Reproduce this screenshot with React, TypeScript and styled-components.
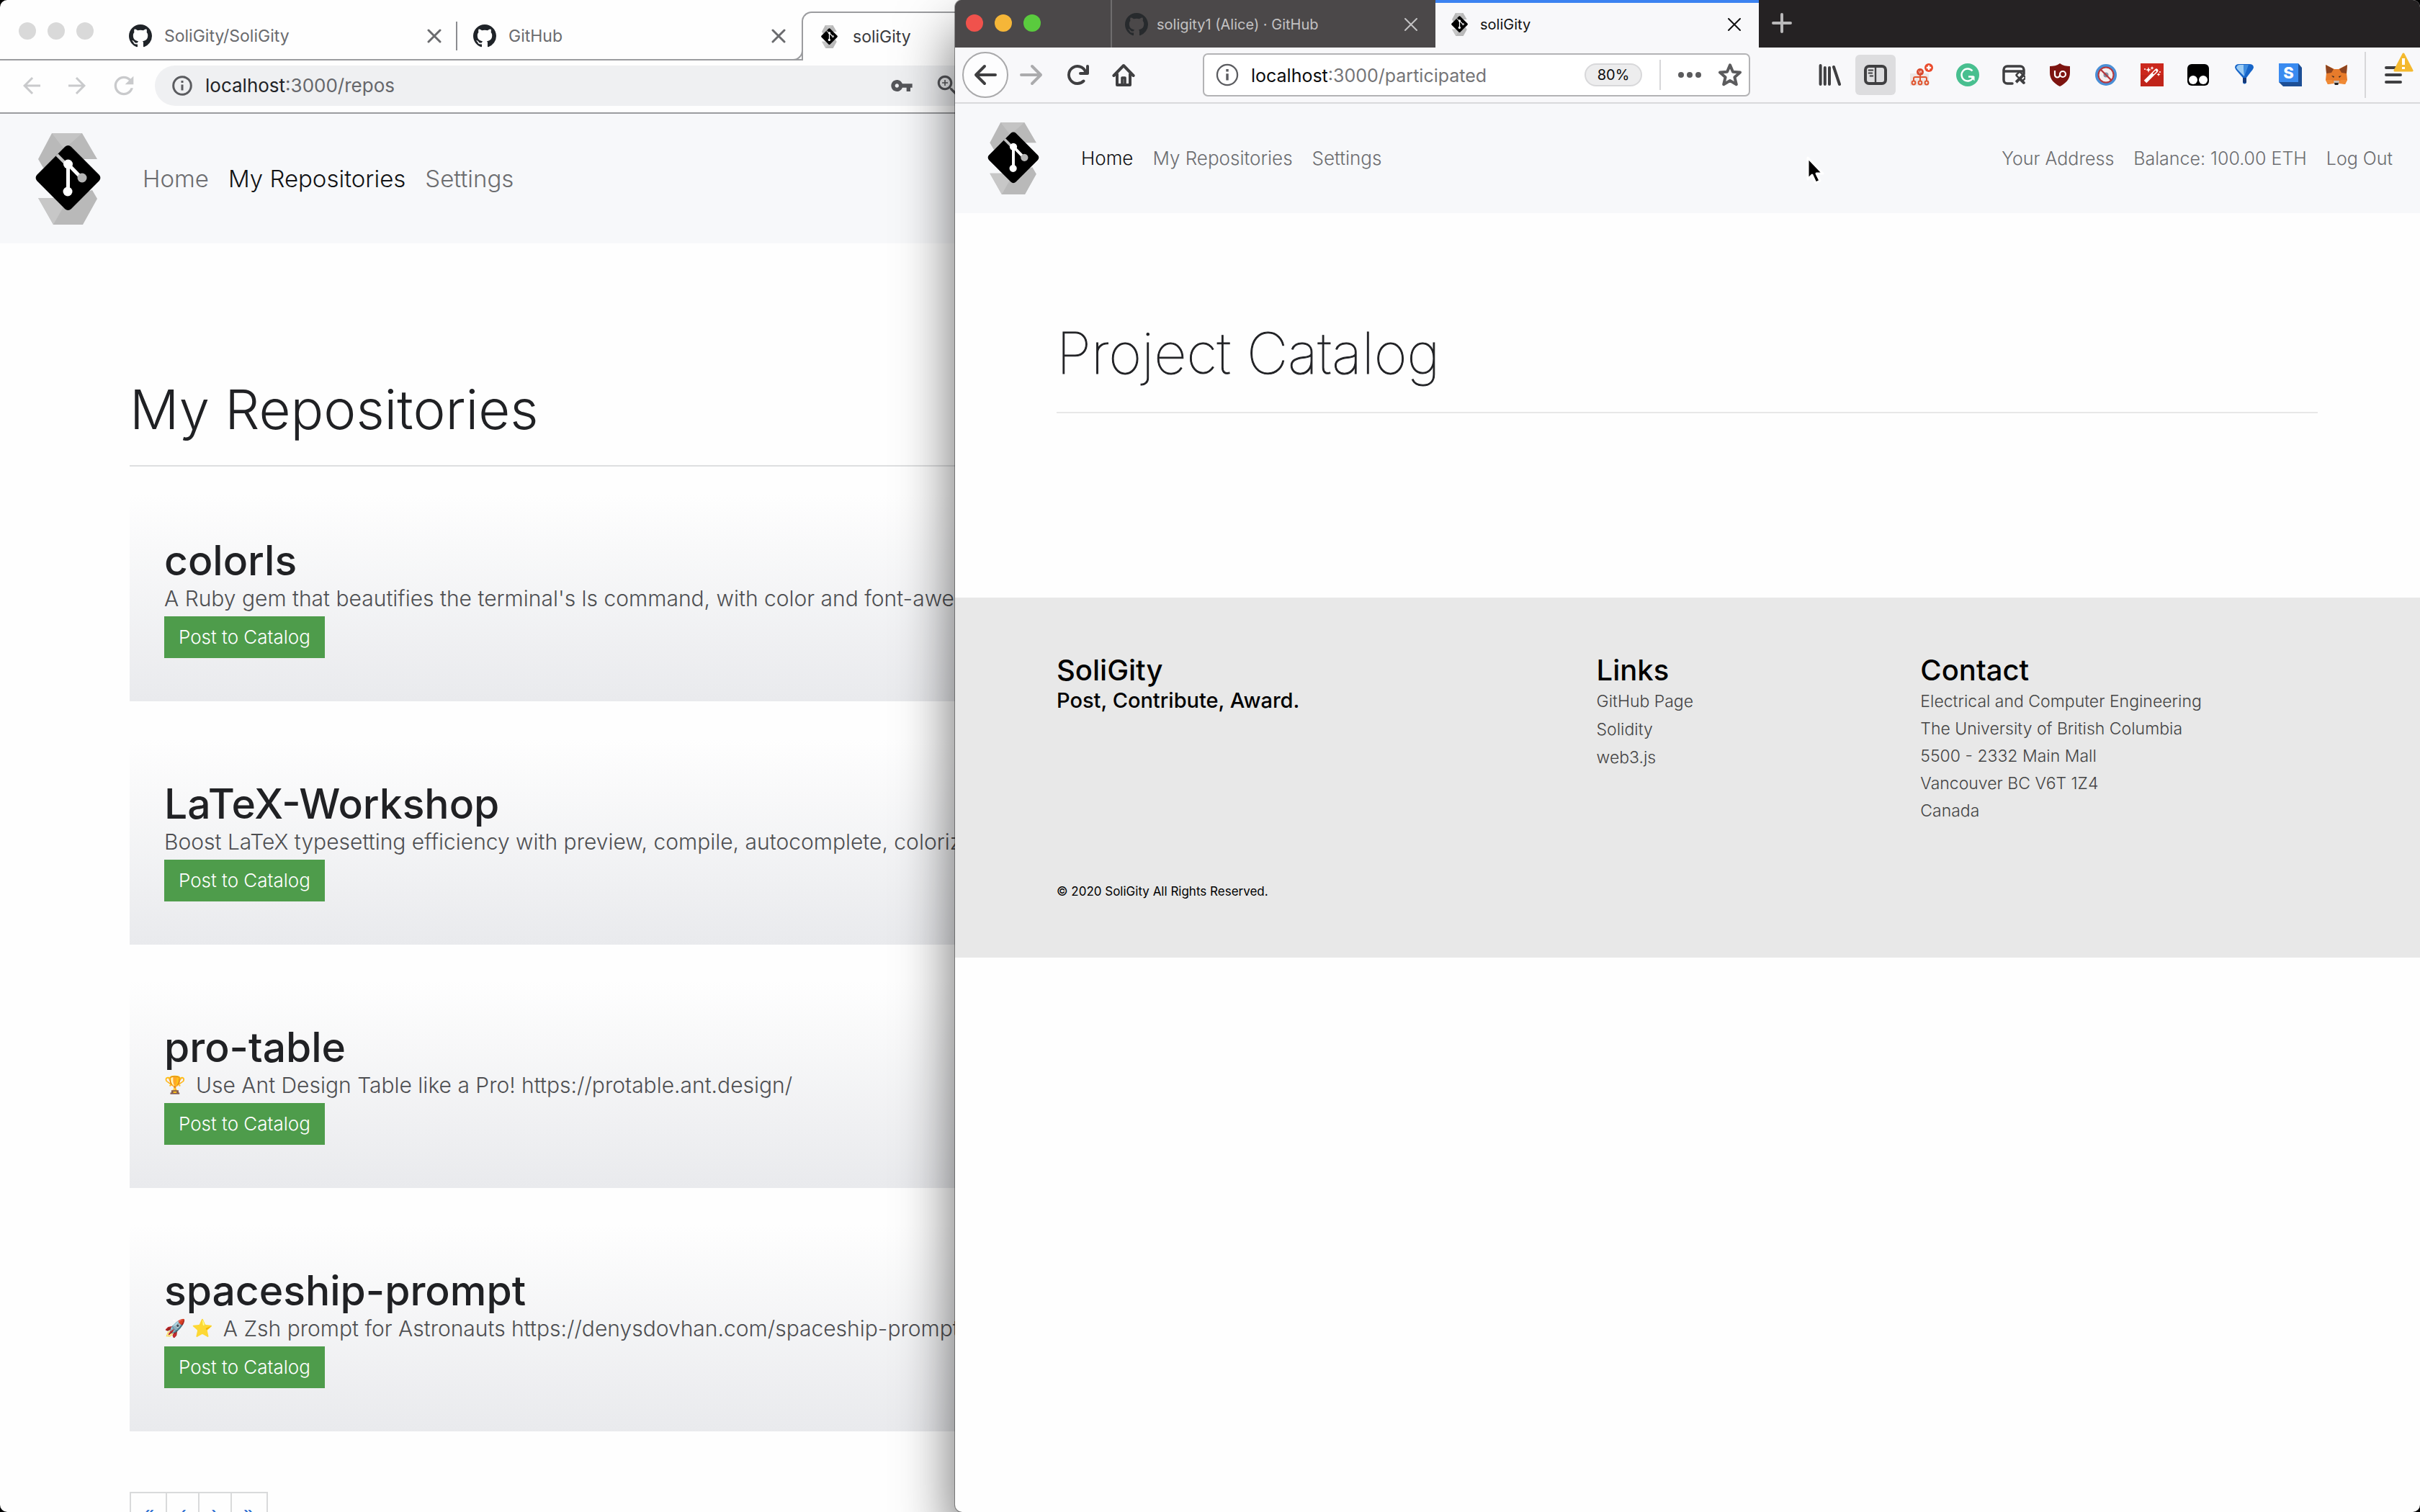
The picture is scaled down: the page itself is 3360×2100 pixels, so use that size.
import React from 'react';
import styled, { createGlobalStyle, css } from 'styled-components';

const GlobalStyle = createGlobalStyle`
  *, *::before, *::after { box-sizing: border-box; }
  body { margin: 0; background: #000; }
  button, input {
    font: inherit;
    color: inherit;
    margin: 0;
    padding: 0;
    border: 0;
    background: none;
    outline: none;
  }
  h1, h2, h3, p, ul { margin: 0; padding: 0; font-weight: inherit; }
  ul { list-style: none; }
  a { color: inherit; text-decoration: none; }
  svg { display: block; flex: none; }
`;

const Desktop = styled.div`
  position: relative;
  height: 100vh;
  overflow: hidden;
  background: #000;
  font-family: Inter, "Liberation Sans", sans-serif;
  font-size: 24px;
  line-height: 32px;
`;

const WindowFrame = styled.section`
  position: absolute;
  top: 0;
  bottom: 0;
  overflow: hidden;
  display: flex;
  flex-direction: column;
  background: #fefefe;
`;

const BackWindow = styled(WindowFrame)`
  left: 0;
  width: 42%;
  border-radius: 10px 0 0 10px;
`;

const FrontWindow = styled(WindowFrame)`
  left: 39.464%;
  right: 0;
  border-radius: 10px;
  box-shadow: 0 0 0 1px rgba(0, 0, 0, 0.35), 0 44px 80px rgba(0, 0, 0, 0.6);
`;

const Lights = styled.div`
  display: flex;
  gap: 16px;
`;

const Light = styled.span<{ $color: string }>`
  width: 24px;
  height: 24px;
  border-radius: 50%;
  background: ${(p) => p.$color};
`;

const IconButton = styled.button`
  display: flex;
  align-items: center;
  justify-content: center;
  flex: none;
`;

/* ---------- rear browser ---------- */

const TabStrip = styled.header`
  display: flex;
  flex: none;
  height: 84px;
  padding-left: 26px;
  box-shadow: inset 0 -2px #9b9c9f;

  ${Lights} { padding: 31px 27px 0 0; }
`;

const stripTab = css`
  display: flex;
  align-items: center;
  gap: 17px;
  margin-top: 16px;
`;

const StripTab = styled.div<{ $divided?: boolean }>`
  ${stripTab}
  flex: none;
  width: 478px;
  height: 68px;
  padding: 0 22px;
  font-size: 23px;
  color: #6a6b6e;
  background: ${(p) => (p.$divided ? 'linear-gradient(#8b8c90, #8b8c90) right center / 2px 40px no-repeat' : 'none')};
`;

const StripTabActive = styled.div`
  ${stripTab}
  position: relative;
  flex: 1;
  padding-left: 20px;
  font-size: 23px;
  color: #3a3b3e;
  background: #fefefe;
  border: solid #9b9c9f;
  border-width: 2px 0 0 2px;
  border-top-left-radius: 14px;

  &::before {
    content: '';
    position: absolute;
    left: -16px;
    bottom: 0;
    width: 16px;
    height: 16px;
    background: #fefefe;
    border: solid #9b9c9f;
    border-width: 0 2px 2px 0;
    border-bottom-right-radius: 14px;
  }
`;

const IconSlot = styled.span`
  display: flex;
  justify-content: center;
  width: 32px;
`;

const TabTitle = styled.span`
  flex: 1;
  white-space: nowrap;
`;

const RearToolbar = styled.div`
  display: flex;
  align-items: center;
  flex: none;
  gap: 27px;
  height: 74px;
  padding: 0 52px 2px 26px;
  border-bottom: 2px solid #9b9c9f;
  color: #c9cacc;
`;

const Omnibox = styled.label`
  display: flex;
  align-items: center;
  flex: 1;
  min-width: 0;
  height: 56px;
  margin-left: -4px;
  padding: 0 24px;
  border-radius: 28px;
  background: #eff0f2;
  font-size: 26px;
  color: #222326;
`;

const HostName = styled.span`
  margin-left: 18px;
`;

const AddressInput = styled.input`
  flex: 1;
  min-width: 0;
  color: #66676b;
`;

const OmniIcons = styled.span`
  display: flex;
  align-items: center;
  gap: 29px;
  color: #55565a;
`;

/* ---------- page parts shared by both windows ---------- */

const Navbar = styled.nav<{ $large?: boolean }>`
  display: flex;
  align-items: center;
  flex: none;
  height: ${(p) => (p.$large ? '180px' : '152px')};
  padding: ${(p) => (p.$large ? '0 49px' : '0 38px 0 45px')};
  background: #f7f8fa;
  font-size: ${(p) => (p.$large ? '33px' : '26px')};
  font-weight: 300;
  white-space: nowrap;
`;

const NavLinks = styled.div<{ $end?: boolean }>`
  display: flex;
  gap: 27px;
  margin-left: ${(p) => (p.$end ? 'auto' : '58px')};
  font-size: ${(p) => (p.$end ? '25px' : 'inherit')};
`;

const NavLink = styled.a<{ $active?: boolean }>`
  color: ${(p) => (p.$active ? '#111214' : '#6c6d70')};
`;

const PageTitle = styled.h1<{ $thin?: boolean }>`
  font-size: ${(p) => (p.$thin ? '79px' : '76px')};
  line-height: 92px;
  font-weight: ${(p) => (p.$thin ? 100 : 300)};
  color: #202124;
  -webkit-text-stroke: ${(p) => (p.$thin ? '1px #202124' : '0')};
`;

const Rule = styled.hr<{ $faint?: boolean }>`
  height: 2px;
  margin: 32px 0 0;
  border: 0;
  background: ${(p) => (p.$faint ? '#e8e8e8' : '#dedfe0')};
`;

const RepoPage = styled.main`
  padding: 184px 0 0 180px;
`;

const RepoList = styled.ul`
  display: flex;
  flex-direction: column;
  gap: 51px;
  margin-top: 39px;
`;

const RepoCard = styled.li`
  padding: 60px 48px;
  overflow: hidden;
  background: linear-gradient(#fefefe, #e9eaed);
`;

const RepoName = styled.h2`
  font-size: 57px;
  line-height: 64px;
  font-weight: 500;
  color: #202124;
`;

const RepoText = styled.p`
  display: flex;
  align-items: center;
  gap: 8px;
  margin-bottom: 5px;
  font-size: 30px;
  line-height: 40px;
  font-weight: 300;
  color: #4e4f52;
  white-space: nowrap;
`;

const Emoji = styled.span`
  font-size: 24px;
  font-family: "Noto Color Emoji", sans-serif;

  & + span:not(&) { margin-left: 6px; }
`;

const PostButton = styled.button`
  display: block;
  height: 58px;
  padding: 0 20px;
  font-size: 26px;
  font-weight: 300;
  color: #fff;
  background: #4e9c4b;
`;

const Pagination = styled.nav`
  display: flex;
  margin-top: 84px;
`;

const PageStep = styled.button`
  height: 60px;
  padding: 0 16px;
  margin-right: -2px;
  border: 2px solid #d9dadb;
  font-size: 28px;
  color: #2f6fd0;
`;

/* ---------- front browser ---------- */

const TitleBar = styled.header`
  display: flex;
  flex: none;
  height: 66px;
  background: #252223;
`;

const TitleLights = styled.div`
  width: 218px;
  padding: 20px 0 0 15px;
  background: #4b4849;
  border-right: 2px solid #6f6d6e;
`;

const FrontTab = styled.div<{ $active?: boolean }>`
  display: flex;
  align-items: center;
  gap: 12px;
  width: 449px;
  padding: 2px 24px 0 18px;
  font-size: 20px;
  color: ${(p) => (p.$active ? '#111' : '#c3c2c3')};
  background: ${(p) => (p.$active ? '#f8f8fa' : '#4b4849')};
  box-shadow: ${(p) => (p.$active ? 'inset 0 4px #3b82f1' : 'none')};
`;

const NewTab = styled(IconButton)`
  width: 64px;
  height: 64px;
`;

const FrontToolbar = styled.div`
  display: flex;
  align-items: center;
  flex: none;
  height: 78px;
  padding-left: 10px;
  border-bottom: 2px solid #d9d9db;
  background: #f8f8fa;
  color: #3f3f41;
`;

const Slot = styled(IconButton)`
  width: 64px;
  height: 64px;
`;

const BackSlot = styled(Slot)`
  border: 2px solid #a9a9ab;
  border-radius: 50%;
  background: #fdfdfe;
`;

const PressedSlot = styled(Slot)`
  width: 56px;
  height: 56px;
  margin: 0 4px;
  border-radius: 6px;
  background: #dddddf;
`;

const UrlBar = styled.label`
  display: flex;
  align-items: center;
  flex: 1;
  min-width: 0;
  height: 60px;
  margin: 0 78px;
  padding: 0 10px 0 16px;
  gap: 24px;
  border: 2px solid #b3b3b5;
  border-radius: 7px;
  background: #fff;
  font-size: 25px;
  color: #0c0c0d;
`;

const UrlText = styled.span`
  display: flex;
  flex: 1;
  min-width: 0;
  margin-left: -7px;
  padding-top: 2px;
  ${AddressInput} { color: #757577; }
`;

const ZoomLevel = styled.button`
  width: 80px;
  height: 32px;
  border: 2px solid #d8d8da;
  border-radius: 16px;
  background: #ededee;
  font-size: 20px;
  line-height: 28px;
`;

const Divider = styled.span<{ $tall?: boolean }>`
  width: 2px;
  height: ${(p) => (p.$tall ? '64px' : '42px')};
  margin-left: ${(p) => (p.$tall ? '7px' : '0')};
  background: #d7d7d9;
`;

const MenuButton = styled(IconButton)`
  position: relative;
  width: 75px;
  height: 64px;
`;

const Badge = styled.span`
  position: absolute;
  top: 1px;
  right: 9px;
`;

const CatalogPage = styled.main`
  padding: 148px 142px 256px 141px;

  ${Rule} { margin-top: 36px; }
`;

const Footer = styled.footer`
  padding: 77px 142px 80px 141px;
  background: #e8e8e8;
  color: #000;
`;

const FooterColumns = styled.div`
  display: grid;
  grid-template-columns: 5fr 3fr 4fr;
  margin-right: -48px;
`;

const FooterHeading = styled.h2`
  font-size: 40px;
  line-height: 48px;
  font-weight: 500;
`;

const Tagline = styled.p`
  font-size: 29px;
  line-height: 36px;
  font-weight: 500;
`;

const FooterList = styled.ul<{ $line: string }>`
  font-size: 23px;
  line-height: ${(p) => p.$line};
  font-weight: 300;
  color: #444;
`;

const Copyright = styled.p`
  margin-top: 81px;
  font-size: 17px;
  line-height: 24px;
`;

const Pointer = styled.span`
  position: absolute;
  left: 74.6%;
  top: 216px;
`;

/* ---------- icons ---------- */

type Size = { size?: number };

const Logo = ({ height }: { height: number }) => (
  <svg width={Math.round((height * 91) / 127)} height={height} viewBox="0 0 91 127" aria-label="SoliGity" role="img">
    <path d="M23 0H65L86 36H60L11 48 4 36Z" fill="#b9b9b9" />
    <path d="M23 0H65L40 22Z" fill="#c9c9c9" opacity=".7" />
    <path d="M25 127H66L86 91 79 79 40 90H4Z" fill="#b9b9b9" />
    <path d="M4 90H46L25 127Z" fill="#cacaca" opacity=".8" />
    <rect x="12" y="28.500" width="67" height="67" rx="6" transform="rotate(45 45.500 62)" fill="#000" />
    <path d="M30 30L43 43" stroke="#c4c4c4" strokeWidth="4.500" />
    <path d="M45.500 43V81M45.500 43L62 60" stroke="#fff" strokeWidth="5" />
    <circle cx="45.500" cy="43" r="6.500" fill="#fff" />
    <circle cx="45" cy="81" r="6.500" fill="#fff" />
    <circle cx="65" cy="62" r="6.500" fill="#b5b5b5" />
  </svg>
);

const GitHubMark = ({ color = '#1f2328' }: { color?: string }) => (
  <svg width="32" height="32" viewBox="0 0 16 16" fill={color}>
    <path d="M8 0C3.58 0 0 3.58 0 8c0 3.54 2.29 6.53 5.47 7.59.4.07.55-.17.55-.38 0-.19-.01-.82-.01-1.49-2.01.37-2.53-.49-2.69-.94-.09-.23-.48-.94-.82-1.13-.28-.15-.68-.52-.01-.53.63-.01 1.08.58 1.23.82.72 1.21 1.87.87 2.33.66.07-.52.28-.87.51-1.07-1.78-.2-3.64-.89-3.64-3.95 0-.87.31-1.59.82-2.15-.08-.2-.36-1.02.08-2.12 0 0 .67-.21 2.2.82.64-.18 1.32-.27 2-.27.68 0 1.36.09 2 .27 1.53-1.04 2.2-.82 2.2-.82.44 1.1.16 1.92.08 2.12.51.56.82 1.27.82 2.15 0 3.07-1.87 3.75-3.65 3.95.29.25.54.73.54 1.48 0 1.07-.01 1.93-.01 2.2 0 .21.15.46.55.38A8.013 8.013 0 0016 8c0-4.42-3.58-8-8-8z" />
  </svg>
);

const Glyph = ({ size = 36, d }: Size & { d: string }) => (
  <svg width={size} height={size} viewBox="0 0 24 24" fill="currentColor">
    <path d={d} />
  </svg>
);

const Cross = ({ size = 20, width = 2 }: Size & { width?: number }) => (
  <svg width={size} height={size} viewBox="0 0 20 20" stroke="currentColor" strokeWidth={width} strokeLinecap="round">
    <path d="M2 2l16 16M18 2L2 18" />
  </svg>
);

const Info = ({ size = 28, width = 3 }: Size & { width?: number }) => (
  <svg width={size} height={size} viewBox="0 0 28 28" fill="none" stroke="#5b5c60" strokeWidth={width}>
    <circle cx="14" cy="14" r="12.300" />
    <path d="M14 12.500v8M14 7v3" strokeWidth="3" />
  </svg>
);

const Line16 = ({ children, size = 32 }: Size & { children: React.ReactNode }) => (
  <svg width={size} height={size} viewBox="0 0 16 16" fill="none" stroke="currentColor" strokeWidth="2" strokeLinecap="round" strokeLinejoin="round">
    {children}
  </svg>
);

const Art = ({ children }: { children: React.ReactNode }) => (
  <svg width="32" height="32" viewBox="0 0 32 32">
    {children}
  </svg>
);

const LibraryIcon = () => (
  <Line16>
    <path d="M1.800 1.500v13M4.900 3v11.500M8 3v11.500M11 2.500l4 12" />
  </Line16>
);

const SidebarIcon = () => (
  <Line16>
    <rect x="1" y="2" width="14" height="12" rx="2.500" />
    <path d="M8 2.500v11" strokeWidth="1.200" />
    <path d="M3.300 4.800h2.800M3.300 6.800h2.300M4.300 8.800h1.800" strokeWidth="1" />
  </Line16>
);

const TreeIcon = () => (
  <Art>
    <rect x="0" y="14" width="26" height="17" fill="#eee6e4" />
    <g fill="none" stroke="#e0552f" strokeWidth="2">
      <path d="M14 17v8M5 24v-3q0-2 2-2h14q2 0 2 2v3" />
      <circle cx="5" cy="27" r="2.400" />
      <circle cx="14" cy="27" r="2.400" />
      <circle cx="23" cy="27" r="2.400" />
    </g>
    <circle cx="14" cy="12" r="5" fill="#d9482c" />
    <path d="M12 10l1.500 4 1.500-4 1 3" stroke="#f6c9bd" fill="none" />
    <circle cx="26" cy="6" r="6" fill="#ea4a2b" />
    <path d="M26 2.800v6.400M22.800 6h6.400" stroke="#fff" strokeWidth="2.400" />
  </Art>
);

const GrammarIcon = () => (
  <Art>
    <circle cx="16" cy="16" r="16" fill="#48bf8f" />
    <path d="M22.500 10.500A8.500 8.500 0 1 0 23.500 20M17 18.500h7.500" fill="none" stroke="#fff" strokeWidth="2.400" />
    <path d="M19 18h6.500v6.500z" fill="#fff" />
  </Art>
);

const BrushIcon = () => (
  <Art>
    <path d="M14 28H7a5 5 0 0 1-5-5V9a5 5 0 0 1 5-5h18a5 5 0 0 1 5 5v6M3 11h26" fill="none" stroke="#3f3f41" strokeWidth="3.500" strokeLinecap="round" />
    <g transform="rotate(45 22 22)">
      <rect x="16" y="13" width="12" height="7" rx="1" fill="#fff" stroke="#3f3f41" strokeWidth="2.500" />
      <path d="M15 19h14v4h-5v6a2 2 0 0 1-4 0v-6h-5z" fill="#3f3f41" transform="rotate(-90 22 20)" />
    </g>
  </Art>
);

const ShieldIcon = () => (
  <Art>
    <path d="M16 0c4 3 9 4 14 4v9c0 9-6 15-14 19C8 28 2 22 2 13V4c5 0 10-1 14-4z" fill="#7d1410" />
    <path d="M9 10v6a3.500 3.500 0 0 0 7 0" fill="none" stroke="#fff" strokeWidth="2.200" />
    <circle cx="20" cy="15" r="4" fill="none" stroke="#fff" strokeWidth="2.200" />
  </Art>
);

const BlockIcon = () => (
  <Art>
    <circle cx="16" cy="16" r="13" fill="#f4eeee" stroke="#4a8fd6" strokeWidth="4" />
    <circle cx="16" cy="16" r="10.500" fill="none" stroke="#b5373c" strokeWidth="2" />
    <circle cx="16" cy="16" r="3.500" fill="#8391a5" />
    <path d="M8.500 8.500l15 15" stroke="#b5373c" strokeWidth="2.400" />
  </Art>
);

const WandIcon = () => (
  <Art>
    <rect width="32" height="32" fill="#cb281d" />
    <path d="M0 16h32v16H0z" fill="#b51f18" opacity=".5" />
    <path d="M6.500 25.500L21 11" stroke="#fff" strokeWidth="5" />
    <path d="M21 11l1-1" stroke="#fff" strokeWidth="5" strokeLinecap="round" />
    <path d="M17.500 14.500l4-4" stroke="#cb281d" strokeWidth="2" />
    <path d="M11 5l1 3 3 1-3 1-1 3-1-3-3-1 3-1zM16 4l.8 1.700 1.700.8-1.700.8L16 9l-.8-1.700-1.700-.8 1.700-.8zM25 13l.8 1.700 1.700.8-1.700.8L25 18l-.8-1.700-1.700-.8 1.700-.8z" fill="#fff" />
    <circle cx="6" cy="8" r="1" fill="#fff" />
    <circle cx="27" cy="12" r="1" fill="#fff" />
  </Art>
);

const MonkeyIcon = () => (
  <Art>
    <rect x="1" y="1" width="30" height="30" rx="6" fill="#000" />
    <circle cx="9" cy="23" r="6" fill="#fff" />
    <circle cx="23" cy="23" r="6" fill="#fff" />
  </Art>
);

const FunnelIcon = () => (
  <Art>
    <path d="M3 6q0-5 6-5h14q6 0 6 5-1 3-4 6l-6 8v7q-3 3-5 0v-7l-7-8Q4 9 3 6z" fill="#1765c8" />
    <path d="M5 6q1-4 5-4h5l1 16-8-8Q6 8 5 6z" fill="#9dccf3" />
    <path d="M15 2h7l-6 16z" fill="#3f8de0" />
    <path d="M14 20h5v6q-2 3-5 0z" fill="#173a78" />
  </Art>
);

const CubeIcon = () => (
  <Art>
    <path d="M0 0h27l5 6v26H6l-6-6z" fill="#1d4f96" />
    <path d="M0 0h27v26H0z" fill="#3a8bf0" />
    <text x="13.500" y="21" textAnchor="middle" fontFamily="Inter, sans-serif" fontWeight="800" fontSize="22" fill="#fff">S</text>
  </Art>
);

const FoxIcon = () => (
  <Art>
    <path d="M1 2l12 6h6l12-6-1 11 1 10-3 6-9-2-1 3h-4l-1-3-9 2-3-6 1-10z" fill="#e77b2b" />
    <path d="M1 2l11 6-3 5-7 1zM31 2L20 8l3 5 7 1z" fill="#8c4420" />
    <path d="M1 23h9l3 5-9 1zM31 23h-9l-3 5 9 1z" fill="#f08a35" />
    <path d="M9 17l4 1-1 2zM23 17l-4 1 1 2z" fill="#3a2b22" />
    <path d="M12 24h8l-1 6h-6z" fill="#c9bdb5" />
    <path d="M13 27h6l-1 3h-4z" fill="#222" />
  </Art>
);

const WarningIcon = () => (
  <svg width="28" height="27" viewBox="0 0 28 27">
    <path d="M14 2L26 25H2z" fill="#f4b92e" stroke="#f4b92e" strokeWidth="3" strokeLinejoin="round" />
    <path d="M14 8v9M14 20v3" stroke="#fff" strokeWidth="4" />
  </svg>
);

const ARROW_BACK = 'M20 11H7.830l5.590-5.590L12 4l-8 8 8 8 1.410-1.410L7.830 13H20v-2z';
const ARROW_FORWARD = 'M12 4l-1.410 1.410L16.170 11H4v2h12.170l-5.580 5.590L12 20l8-8z';
const REFRESH =
  'M17.650 6.350C16.200 4.900 14.210 4 12 4c-4.420 0-7.990 3.580-7.990 8s3.570 8 7.990 8c3.730 0 6.840-2.550 7.730-6h-2.080c-.82 2.330-3.040 4-5.650 4-3.310 0-6-2.690-6-6s2.690-6 6-6c1.660 0 3.140.69 4.220 1.780L13 11h7V4l-2.350 2.350z';
const KEY =
  'M12.650 10C11.830 7.670 9.610 6 7 6c-3.310 0-6 2.690-6 6s2.690 6 6 6c2.610 0 4.830-1.670 5.650-4H17v4h4v-4h2v-4H12.650zM7 14c-1.100 0-2-.9-2-2s.9-2 2-2 2 .9 2 2-.9 2-2 2z';
const ZOOM_IN =
  'M15.500 14h-.79l-.28-.27C15.410 12.590 16 11.110 16 9.500 16 5.910 13.090 3 9.500 3S3 5.910 3 9.500 5.910 16 9.500 16c1.610 0 3.090-.59 4.230-1.570l.27.28v.79l5 4.990L20.490 19l-4.990-5zm-6 0C7.010 14 5 11.990 5 9.500S7.010 5 9.500 5 14 7.010 14 9.500 11.990 14 9.500 14zM12 10h-2v2H9v-2H7V9h2V7h1v2h2v1z';

/* ---------- content ---------- */

const REPOS = [
  { name: 'colorls', emoji: [], text: "A Ruby gem that beautifies the terminal's ls command, with color and font-awesome icons." },
  { name: 'LaTeX-Workshop', emoji: [], text: 'Boost LaTeX typesetting efficiency with preview, compile, autocomplete, colorize, and more.' },
  { name: 'pro-table', emoji: ['🏆'], text: 'Use Ant Design Table like a Pro! https://protable.ant.design/' },
  { name: 'spaceship-prompt', emoji: ['🚀', '⭐'], text: 'A Zsh prompt for Astronauts https://denysdovhan.com/spaceship-prompt/' },
];

const EXTENSIONS = [
  ['Repository tree', TreeIcon],
  ['Grammar check', GrammarIcon],
  ['Page styles', BrushIcon],
  ['Ad blocker', ShieldIcon],
  ['Script blocker', BlockIcon],
  ['Magic wand', WandIcon],
  ['User scripts', MonkeyIcon],
  ['Filter', FunnelIcon],
  ['Session', CubeIcon],
  ['Wallet', FoxIcon],
] as const;

const ADDRESS = [
  'Electrical and Computer Engineering',
  'The University of British Columbia',
  '5500 - 2332 Main Mall',
  'Vancouver BC V6T 1Z4',
  'Canada',
];

const RearBrowser = () => (
  <BackWindow>
    <TabStrip>
      <Lights>
        {[0, 1, 2].map((i) => (
          <Light key={i} $color="#d9d9d9" />
        ))}
      </Lights>
      <StripTab $divided>
        <IconSlot><GitHubMark /></IconSlot>
        <TabTitle>SoliGity/SoliGity</TabTitle>
        <IconButton aria-label="Close tab"><Cross width={3} /></IconButton>
      </StripTab>
      <StripTab>
        <IconSlot><GitHubMark /></IconSlot>
        <TabTitle>GitHub</TabTitle>
        <IconButton aria-label="Close tab"><Cross width={3} /></IconButton>
      </StripTab>
      <StripTabActive>
        <IconSlot><Logo height={32} /></IconSlot>
        <TabTitle>soliGity</TabTitle>
      </StripTabActive>
    </TabStrip>
    <RearToolbar>
      <IconButton aria-label="Back"><Glyph d={ARROW_BACK} /></IconButton>
      <IconButton aria-label="Forward"><Glyph d={ARROW_FORWARD} /></IconButton>
      <IconButton aria-label="Reload"><Glyph d={REFRESH} size={40} /></IconButton>
      <Omnibox>
        <Info />
        <HostName>localhost</HostName>
        <AddressInput aria-label="Address" defaultValue=":3000/repos" />
        <OmniIcons>
          <Glyph d={KEY} size={32} />
          <Glyph d={ZOOM_IN} size={38} />
        </OmniIcons>
      </Omnibox>
    </RearToolbar>
    <Navbar $large>
      <Logo height={127} />
      <NavLinks>
        <NavLink href="#home">Home</NavLink>
        <NavLink href="#repos" $active>My Repositories</NavLink>
        <NavLink href="#settings">Settings</NavLink>
      </NavLinks>
    </Navbar>
    <RepoPage>
      <PageTitle>My Repositories</PageTitle>
      <Rule />
      <RepoList>
        {REPOS.map((repo) => (
          <RepoCard key={repo.name}>
            <RepoName>{repo.name}</RepoName>
            <RepoText>
              {repo.emoji.map((e) => (
                <Emoji key={e}>{e}</Emoji>
              ))}
              <span>{repo.text}</span>
            </RepoText>
            <PostButton>Post to Catalog</PostButton>
          </RepoCard>
        ))}
      </RepoList>
      <Pagination aria-label="Pages">
        {['«', '‹', '›', '»'].map((s) => (
          <PageStep key={s}>{s}</PageStep>
        ))}
      </Pagination>
    </RepoPage>
  </BackWindow>
);

const FrontBrowser = () => (
  <FrontWindow>
    <TitleBar>
      <TitleLights>
        <Lights>
          <Light $color="#f0524c" />
          <Light $color="#f5b638" />
          <Light $color="#5acb3e" />
        </Lights>
      </TitleLights>
      <FrontTab>
        <IconSlot><GitHubMark color="#272a2d" /></IconSlot>
        <TabTitle>soligity1 (Alice) · GitHub</TabTitle>
        <IconButton aria-label="Close tab"><Cross /></IconButton>
      </FrontTab>
      <FrontTab $active>
        <IconSlot><Logo height={32} /></IconSlot>
        <TabTitle>soliGity</TabTitle>
        <IconButton aria-label="Close tab"><Cross /></IconButton>
      </FrontTab>
      <NewTab aria-label="New tab">
        <svg width="28" height="28" viewBox="0 0 28 28" stroke="#b9b8b9" strokeWidth="4" strokeLinecap="round">
          <path d="M14 2v24M2 14h24" />
        </svg>
      </NewTab>
    </TitleBar>
    <FrontToolbar>
      <BackSlot aria-label="Back">
        <Line16><path d="M15 8H1.500M7.500 2l-6 6 6 6" /></Line16>
      </BackSlot>
      <Slot aria-label="Forward">
        <Line16><g stroke="#ababad"><path d="M1 8h13.500M8.500 2l6 6-6 6" /></g></Line16>
      </Slot>
      <Slot aria-label="Reload">
        <svg width="32" height="32" viewBox="0 0 16 16" fill="currentColor">
          <path d="M15 1a1 1 0 0 0-1 1v2.418A6.995 6.995 0 1 0 8 15a6.954 6.954 0 0 0 4.950-2.050 1 1 0 0 0-1.414-1.414A5.019 5.019 0 1 1 12.549 6H10a1 1 0 0 0 0 2h5a1 1 0 0 0 1-1V2a1 1 0 0 0-1-1z" />
        </svg>
      </Slot>
      <Slot aria-label="Home">
        <Line16>
          <path d="M1.200 8.500L8 1.500l6.800 7M3.500 7.500V15h9V7.500" />
          <path d="M7 14.500V10h2v4.500" strokeWidth="1.800" />
        </Line16>
      </Slot>
      <UrlBar>
        <Info size={32} width={2} />
        <UrlText>
          <span>localhost</span>
          <AddressInput aria-label="Address" defaultValue=":3000/participated" />
        </UrlText>
        <ZoomLevel>80%</ZoomLevel>
        <Divider />
        <IconButton aria-label="Page actions">
          <svg width="32" height="32" viewBox="0 0 32 32" fill="#5b5b5d">
            <circle cx="4" cy="16" r="4" /><circle cx="16" cy="16" r="4" /><circle cx="28" cy="16" r="4" />
          </svg>
        </IconButton>
        <IconButton aria-label="Bookmark">
          <Line16>
            <g stroke="#5b5b5d"><path d="M8 1.200l2 4.700 5 .4-3.800 3.300 1.200 5L8 12l-4.400 2.600 1.200-5L1 6.300l5-.4z" /></g>
          </Line16>
        </IconButton>
      </UrlBar>
      <Slot aria-label="Library"><LibraryIcon /></Slot>
      <PressedSlot aria-label="Sidebar"><SidebarIcon /></PressedSlot>
      {EXTENSIONS.map(([label, Icon]) => (
        <Slot key={label} aria-label={label}><Icon /></Slot>
      ))}
      <Divider $tall />
      <MenuButton aria-label="Menu">
        <svg width="24" height="26" viewBox="0 0 24 26" stroke="currentColor" strokeWidth="4" strokeLinecap="round">
          <path d="M2 3h20M2 13h20M2 23h20" />
        </svg>
        <Badge><WarningIcon /></Badge>
      </MenuButton>
    </FrontToolbar>
    <Navbar>
      <Logo height={100} />
      <NavLinks>
        <NavLink href="#home" $active>Home</NavLink>
        <NavLink href="#repos">My Repositories</NavLink>
        <NavLink href="#settings">Settings</NavLink>
      </NavLinks>
      <NavLinks $end>
        <NavLink href="#address">Your Address</NavLink>
        <NavLink href="#balance">Balance: 100.00 ETH</NavLink>
        <NavLink href="#logout">Log Out</NavLink>
      </NavLinks>
    </Navbar>
    <CatalogPage>
      <PageTitle $thin>Project Catalog</PageTitle>
      <Rule $faint />
    </CatalogPage>
    <Footer>
      <FooterColumns>
        <div>
          <FooterHeading>SoliGity</FooterHeading>
          <Tagline>Post, Contribute, Award.</Tagline>
        </div>
        <div>
          <FooterHeading>Links</FooterHeading>
          <FooterList $line="39px">
            <li><a href="#github">GitHub Page</a></li>
            <li><a href="#solidity">Solidity</a></li>
            <li><a href="#web3">web3.js</a></li>
          </FooterList>
        </div>
        <div>
          <FooterHeading>Contact</FooterHeading>
          <FooterList $line="38px">
            {ADDRESS.map((line) => (
              <li key={line}>{line}</li>
            ))}
          </FooterList>
        </div>
      </FooterColumns>
      <Copyright>© 2020 SoliGity All Rights Reserved.</Copyright>
    </Footer>
  </FrontWindow>
);

export default function App() {
  return (
    <>
      <GlobalStyle />
      <Desktop>
        <RearBrowser />
        <FrontBrowser />
        <Pointer aria-hidden="true">
          <svg width="32" height="46" viewBox="0 0 32 46">
            <path d="M3 3v30l6-6 5 11 6-3-5-10h9z" fill="#000" stroke="#fff" strokeWidth="3" strokeLinejoin="round" />
          </svg>
        </Pointer>
      </Desktop>
    </>
  );
}
